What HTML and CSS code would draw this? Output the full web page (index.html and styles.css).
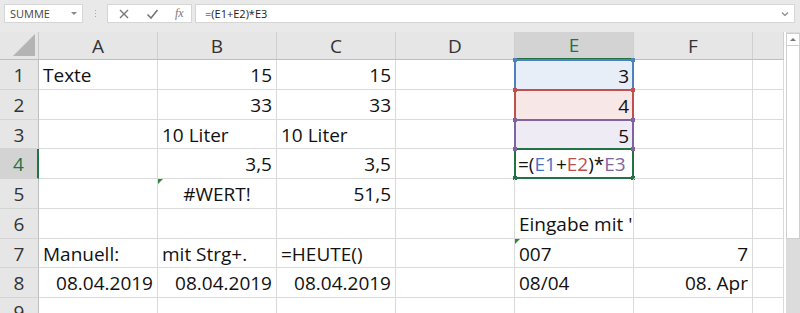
FILE: index.html
```html
<!DOCTYPE html>
<html lang="de">
<head>
  <meta charset="UTF-8">
  <title>Tabelle</title>
  <link rel="stylesheet" href="styles.css">
</head>
<body>

  <div class="formula-bar">
    <div class="name-box">
      <span class="name-text">SUMME</span>
      <span class="name-arrow"></span>
    </div>
    <div class="grip"><i></i><i></i><i></i></div>
    <div class="fx-buttons">
      <svg class="fx-icon" width="12" height="12" viewBox="0 0 12 12"><path d="M2 2 L10 10 M10 2 L2 10" stroke="#777" stroke-width="1.4" fill="none"/></svg>
      <svg class="fx-icon" width="13" height="12" viewBox="0 0 13 12"><path d="M1.5 6.5 L5 10 L11.5 2" stroke="#777" stroke-width="1.6" fill="none"/></svg>
      <span class="fx-text">fx</span>
    </div>
    <div class="formula-input">
      <span class="formula-text">=(E1+E2)*E3</span>
      <svg class="formula-chevron" width="8" height="6" viewBox="0 0 8 6"><path d="M1 1.5 L4 4.5 L7 1.5" stroke="#888" stroke-width="1.2" fill="none"/></svg>
    </div>
  </div>

  <div class="sheet">
    <div class="grid">
      <!-- header -->
      <div class="corner"><span class="corner-tri"></span></div>
      <div class="col-head">A</div>
      <div class="col-head">B</div>
      <div class="col-head">C</div>
      <div class="col-head">D</div>
      <div class="col-head active">E</div>
      <div class="col-head">F</div>
      <div class="col-head"></div>

      <!-- row 1 -->
      <div class="row-head">1</div>
      <div class="cell">Texte</div>
      <div class="cell right">15</div>
      <div class="cell right">15</div>
      <div class="cell"></div>
      <div class="cell right ref ref-blue">3</div>
      <div class="cell"></div>
      <div class="cell"></div>

      <!-- row 2 -->
      <div class="row-head">2</div>
      <div class="cell"></div>
      <div class="cell right">33</div>
      <div class="cell right">33</div>
      <div class="cell"></div>
      <div class="cell right ref ref-red">4</div>
      <div class="cell"></div>
      <div class="cell"></div>

      <!-- row 3 -->
      <div class="row-head">3</div>
      <div class="cell"></div>
      <div class="cell">10 Liter</div>
      <div class="cell">10 Liter</div>
      <div class="cell"></div>
      <div class="cell right ref ref-purple">5</div>
      <div class="cell"></div>
      <div class="cell"></div>

      <!-- row 4 -->
      <div class="row-head active">4</div>
      <div class="cell"></div>
      <div class="cell right">3,5</div>
      <div class="cell right">3,5</div>
      <div class="cell"></div>
      <div class="cell ref ref-green">=(<span class="c-blue">E1</span>+<span class="c-red">E2</span>)*<span class="c-purple">E3</span><span class="corner-bl"></span><span class="corner-br"></span></div>
      <div class="cell"></div>
      <div class="cell"></div>

      <!-- row 5 -->
      <div class="row-head">5</div>
      <div class="cell"></div>
      <div class="cell center flag">#WERT!</div>
      <div class="cell right">51,5</div>
      <div class="cell"></div>
      <div class="cell"></div>
      <div class="cell"></div>
      <div class="cell"></div>

      <!-- row 6 -->
      <div class="row-head">6</div>
      <div class="cell"></div>
      <div class="cell"></div>
      <div class="cell"></div>
      <div class="cell"></div>
      <div class="cell">Eingabe mit '</div>
      <div class="cell"></div>
      <div class="cell"></div>

      <!-- row 7 -->
      <div class="row-head">7</div>
      <div class="cell">Manuell:</div>
      <div class="cell">mit Strg+.</div>
      <div class="cell">=HEUTE()</div>
      <div class="cell"></div>
      <div class="cell flag">007</div>
      <div class="cell right">7</div>
      <div class="cell"></div>

      <!-- row 8 -->
      <div class="row-head">8</div>
      <div class="cell right">08.04.2019</div>
      <div class="cell right">08.04.2019</div>
      <div class="cell right">08.04.2019</div>
      <div class="cell"></div>
      <div class="cell">08/04</div>
      <div class="cell right">08. Apr</div>
      <div class="cell"></div>

      <!-- row 9 -->
      <div class="row-head">9</div>
      <div class="cell"></div>
      <div class="cell"></div>
      <div class="cell"></div>
      <div class="cell"></div>
      <div class="cell"></div>
      <div class="cell"></div>
      <div class="cell"></div>
    </div>

    <div class="scrollbar">
      <div class="scroll-up"><span class="up-arrow"></span></div>
      <div class="scroll-thumb"></div>
      <div class="scroll-track"></div>
    </div>
  </div>

</body>
</html>
```

FILE: styles.css
```css
body{
  margin: 0;
  width: 800px;
  height: 313px;
  overflow: hidden;
  background-color: white;
  font-family: "Open Sans", sans-serif;
}

/* formula bar */

.formula-bar{
  height: 32px;
  box-sizing: border-box;
  background-color: #e9e9e9;
  display: flex;
  align-items: flex-start;
  padding: 4px 0 0 4px;
}

.name-box,
.fx-buttons,
.formula-input{
  height: 19px;
  box-sizing: border-box;
  background-color: white;
  border: 1px solid #d6d6d6;
  display: flex;
  align-items: center;
}

.name-box{
  width: 79px;
  padding: 0 0 0 5px;
  justify-content: space-between;
}

.name-text{
  font-size: 11px;
  color: #444;
  line-height: 17px;
}

.name-arrow{
  width: 0;
  height: 0;
  border-left: 3px solid transparent;
  border-right: 3px solid transparent;
  border-top: 3px solid #888;
  margin-right: 5px;
}

.grip{
  width: 24px;
  height: 19px;
  display: flex;
  flex-direction: column;
  align-items: center;
  justify-content: center;
  gap: 2px;
}

.grip i{
  display: block;
  width: 1px;
  height: 1px;
  background-color: #aaa;
}

.fx-buttons{
  width: 85px;
  padding: 0 0 0 10px;
  gap: 16px;
}

.fx-text{
  font-family: "Liberation Serif", serif;
  font-style: italic;
  font-size: 12px;
  color: #777;
  line-height: 17px;
}

.formula-input{
  width: 600px;
  margin-left: 3px;
  padding: 0 5px 0 9px;
  justify-content: space-between;
}

.formula-text{
  font-size: 11px;
  color: #222;
  line-height: 17px;
}

/* sheet */

.sheet{
  display: flex;
  height: 281px;
}

.grid{
  width: 784px;
  display: grid;
  grid-template-columns: 39px repeat(6, 119px) 31px;
  grid-template-rows: 28px 30px 30px 29px 30px 30px 30px 29px 30px 1fr;
  font-size: 19px;
  color: #111;
}

.corner,
.col-head,
.row-head{
  background-color: #e6e6e6;
  color: #333;
  display: flex;
  align-items: center;
  justify-content: center;
  box-sizing: border-box;
  line-height: 26px;
}

.corner{
  position: relative;
  border-right: 1px solid #c8c8c8;
  border-bottom: 1px solid #bdbdbd;
}

.corner-tri{
  position: absolute;
  right: 3px;
  bottom: 3px;
  width: 0;
  height: 0;
  border-left: 22px solid transparent;
  border-bottom: 22px solid #b4b4b4;
}

.col-head{
  border-right: 1px solid #cfcfcf;
  border-bottom: 1px solid #bdbdbd;
}

.col-head.active{
  background-color: #d3d3d3;
  color: #217346;
  border-bottom: 2px solid #217346;
}

.row-head{
  border-right: 1px solid #bdbdbd;
  border-bottom: 1px solid #d4d4d4;
  padding-top: 1px;
}

.row-head.active{
  background-color: #d3d3d3;
  color: #217346;
  border-right: 2px solid #217346;
}

.cell{
  position: relative;
  box-sizing: border-box;
  border-right: 1px solid #dadada;
  border-bottom: 1px solid #dadada;
  padding: 1px 4px 0 4px;
  display: flex;
  align-items: center;
  white-space: nowrap;
  line-height: 26px;
}

.cell.right{
  justify-content: flex-end;
}

.cell.center{
  justify-content: center;
}

/* error indicator triangle */
.cell.flag::before{
  content: "";
  position: absolute;
  left: 0;
  top: 0;
  width: 0;
  height: 0;
  border-top: 5px solid #2e8b3a;
  border-right: 5px solid transparent;
}

/* reference ranges */

.ref{
  border-left: 2px solid;
  border-right: 2px solid;
  border-top: 2px solid;
  border-bottom: none;
  margin-left: -1px;
  margin-top: -1px;
  margin-bottom: 0;
  padding-right: 3px;
}

.ref-blue{
  border-color: #4f81bd;
  background-color: #e8eef8;
}

.ref-red{
  border-color: #c0504d;
  background-color: #f8e7e7;
}

.ref-purple{
  border-color: #8064a2;
  background-color: #eeebf4;
}

.ref-green{
  border-color: #217346;
  border-bottom: 2px solid #217346;
  padding-left: 2px;
}

.ref::before,
.ref::after,
.corner-bl,
.corner-br{
  content: "";
  position: absolute;
  width: 4px;
  height: 4px;
  background-color: inherit;
}

.ref::before{
  left: -3px;
  top: -3px;
}

.ref::after{
  right: -3px;
  top: -3px;
}

.ref-blue::before,
.ref-blue::after{
  background-color: #4f81bd;
}

.ref-red::before,
.ref-red::after{
  background-color: #c0504d;
}

.ref-purple::before,
.ref-purple::after{
  background-color: #8064a2;
}

.ref-green::before,
.ref-green::after{
  background-color: #8064a2;
}

.corner-bl,
.corner-br{
  background-color: #217346;
  bottom: -3px;
}

.corner-bl{
  left: -3px;
}

.corner-br{
  right: -3px;
}

.c-blue{
  color: #4472c4;
}

.c-red{
  color: #c0504d;
}

.c-purple{
  color: #8064a2;
}

/* scrollbar */

.scrollbar{
  width: 14px;
  margin-left: 2px;
  background-color: #dcdcdc;
  display: flex;
  flex-direction: column;
}

.scroll-up{
  height: 11px;
  margin-top: 1px;
  background-color: white;
  border: 1px solid #cfcfcf;
  display: flex;
  align-items: center;
  justify-content: center;
}

.up-arrow{
  width: 0;
  height: 0;
  border-left: 3px solid transparent;
  border-right: 3px solid transparent;
  border-bottom: 3px solid #777;
}

.scroll-thumb{
  height: 192px;
  background-color: white;
  border: 1px solid #cfcfcf;
  border-top: none;
}

.scroll-track{
  flex: 1;
}
```
